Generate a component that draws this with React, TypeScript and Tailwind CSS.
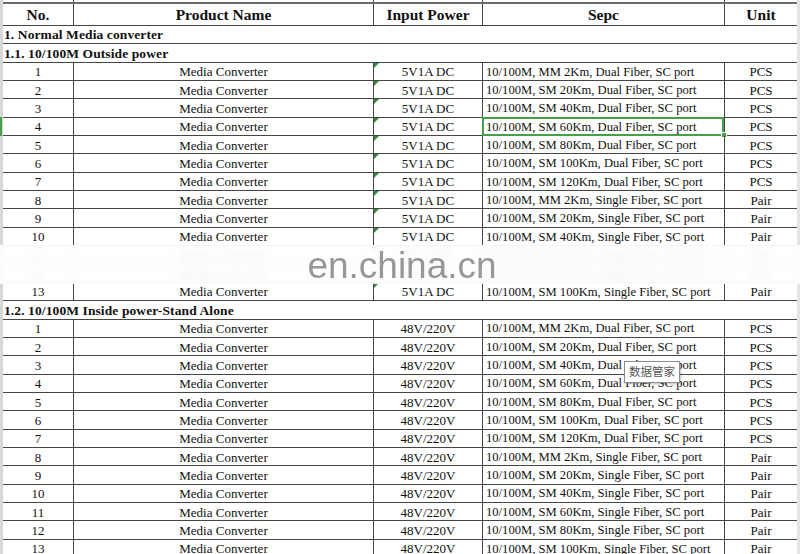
import React from "react";

type Row = { no: number; power: string; spec: string; unit: string; flag?: boolean };

const SPECS: [string, string, string][] = [
  ["MM 2Km", "Dual", "PCS"],
  ["SM 20Km", "Dual", "PCS"],
  ["SM 40Km", "Dual", "PCS"],
  ["SM 60Km", "Dual", "PCS"],
  ["SM 80Km", "Dual", "PCS"],
  ["SM 100Km", "Dual", "PCS"],
  ["SM 120Km", "Dual", "PCS"],
  ["MM 2Km", "Single", "Pair"],
  ["SM 20Km", "Single", "Pair"],
  ["SM 40Km", "Single", "Pair"],
  ["SM 60Km", "Single", "Pair"],
  ["SM 80Km", "Single", "Pair"],
  ["SM 100Km", "Single", "Pair"],
];

const makeRows = (power: string, flag: boolean): Row[] =>
  SPECS.map(([dist, fiber, unit], i) => ({
    no: i + 1,
    power,
    spec: `10/100M, ${dist}, ${fiber} Fiber, SC port`,
    unit,
    flag,
  }));

const outside = makeRows("5V1A DC", true);
const inside = makeRows("48V/220V", false);

const GRID = "grid grid-cols-[71px_300px_109px_242px_72px]";
const LINE = "border-[#454545]";

const DataRow = ({ r, selected }: { r: Row; selected?: boolean }) => (
  <div className={`${GRID} h-[18.35px] border-b ${LINE} text-[13px] leading-none text-[#111]`}>
    <div className={`flex items-center justify-center border-r ${LINE} pt-px`}>{r.no}</div>
    <div className={`flex items-center justify-center border-r ${LINE} pt-px`}>Media Converter</div>
    <div className={`relative flex items-center justify-center border-r ${LINE} pt-px`}>
      {r.flag && (
        <span className="absolute left-0 top-0 h-0 w-0 border-t-[5px] border-r-[5px] border-t-[#2f8a3a] border-r-transparent" />
      )}
      {r.power}
    </div>
    <div className={`relative flex items-center border-r ${LINE} pl-[3px] pt-px text-[12.6px] whitespace-nowrap`}>
      {r.spec}
      {selected && (
        <>
          <span className="absolute -left-px -top-px -right-0 -bottom-px border-2 border-[#45a04a]" />
          <span className="absolute -bottom-[3px] -right-[3px] h-[6px] w-[6px] border border-white bg-[#45a04a]" />
        </>
      )}
    </div>
    <div className="flex items-center justify-center pt-px">{r.unit}</div>
  </div>
);

const SectionRow = ({ children }: { children: React.ReactNode }) => (
  <div className={`flex h-[18.35px] items-center border-b ${LINE} pl-[1px] pt-px text-[13.5px] font-bold leading-none tracking-[0.1px] text-[#111]`}>
    {children}
  </div>
);

export default function App() {
  return (
    <div className="relative flex h-[554px] w-[800px] overflow-hidden bg-white font-['Liberation_Serif',serif]">
      {/* sheet edge */}
      <div className="relative w-[3px] shrink-0 bg-[#d6d6d6]">
        <span className="absolute left-0 top-[117px] h-[19px] w-[2px] bg-[#45a04a]" />
      </div>

      <div className="w-[794px] shrink-0">
        <div className={`${GRID} h-[4px] border-b-2 border-b-[#6a6a6a]`}>
          <div className={`border-r ${LINE}`} />
          <div className={`border-r ${LINE}`} />
          <div className={`border-r ${LINE}`} />
          <div className={`border-r ${LINE}`} />
          <div />
        </div>
        <div className={`${GRID} h-[22px] border-b ${LINE} text-[15.5px] font-bold leading-none text-[#111]`}>
          <div className={`flex items-center justify-center border-r ${LINE}`}>No.</div>
          <div className={`flex items-center justify-center border-r ${LINE}`}>Product Name</div>
          <div className={`flex items-center justify-center border-r ${LINE}`}>Input Power</div>
          <div className={`flex items-center justify-center border-r ${LINE}`}>Sepc</div>
          <div className="flex items-center justify-center">Unit</div>
        </div>

        <SectionRow>1. Normal Media converter</SectionRow>
        <SectionRow>1.1. 10/100M Outside power</SectionRow>
        {outside.map((r) => (
          <DataRow key={`o${r.no}`} r={r} selected={r.no === 4} />
        ))}

        <SectionRow>1.2. 10/100M Inside power-Stand Alone</SectionRow>
        {inside.map((r) => (
          <DataRow key={`i${r.no}`} r={r} />
        ))}
      </div>

      <div className="w-[3px] shrink-0 bg-[#e4e4e4]" />

      {/* watermark band */}
      <div className="absolute left-0 right-0 top-[245px] flex h-[39px] items-center justify-center bg-white/90 backdrop-blur-[4px]">
        <span className="ml-[4px] mt-[2px] font-['Liberation_Sans',Arial,sans-serif] text-[37px] leading-none text-[#979797]">
          en.china.cn
        </span>
      </div>

      {/* hover tip */}
      <div className="absolute left-[624px] top-[361px] flex h-[22px] w-[56px] items-center justify-center border border-[#8c8c8c] bg-white shadow-[1px_1px_2px_rgba(0,0,0,0.25)] font-['Noto_Sans_CJK_SC',sans-serif] text-[11.5px] leading-none text-[#555]">
        数据管家
      </div>
    </div>
  );
}
